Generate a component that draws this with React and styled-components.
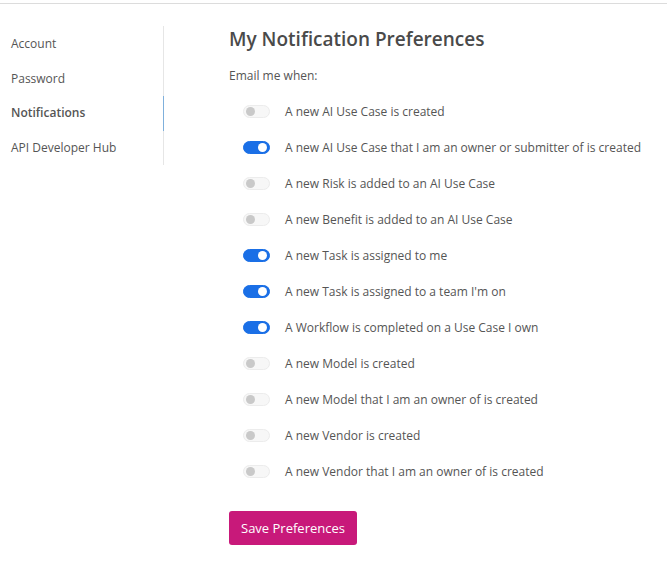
import React, { useState } from 'react';
import styled, { createGlobalStyle } from 'styled-components';

const GlobalStyle = createGlobalStyle`
  body {
    margin: 0;
    background: #fff;
    font-family: "Open Sans", "Liberation Sans", sans-serif;
    color: #555;
  }
`;

const prefsList = [
  { label: 'A new AI Use Case is created', on: false },
  { label: 'A new AI Use Case that I am an owner or submitter of is created', on: true },
  { label: 'A new Risk is added to an AI Use Case', on: false },
  { label: 'A new Benefit is added to an AI Use Case', on: false },
  { label: 'A new Task is assigned to me', on: true },
  { label: "A new Task is assigned to a team I'm on", on: true },
  { label: 'A Workflow is completed on a Use Case I own', on: true },
  { label: 'A new Model is created', on: false },
  { label: 'A new Model that I am an owner of is created', on: false },
  { label: 'A new Vendor is created', on: false },
  { label: 'A new Vendor that I am an owner of is created', on: false },
];

const navItems = ['Account', 'Password', 'Notifications', 'API Developer Hub'];

const App = () => {
  const [prefs, setPrefs] = useState(prefsList);

  const flip = (i) => {
    setPrefs(prefs.map((p, j) => (j === i ? { ...p, on: !p.on } : p)));
  };

  return (
    <>
      <GlobalStyle />
      <Page>
        <Side>
          {navItems.map((item) => (
            <NavItem key={item} active={item === 'Notifications'}>
              {item}
            </NavItem>
          ))}
        </Side>
        <Main>
          <Title>My Notification Preferences</Title>
          <Lead>Email me when:</Lead>
          <List>
            {prefs.map((p, i) => (
              <Row key={p.label}>
                <Toggle on={p.on} onClick={() => flip(i)}>
                  <Knob on={p.on} />
                </Toggle>
                <Label>{p.label}</Label>
              </Row>
            ))}
          </List>
          <SaveButton>Save Preferences</SaveButton>
        </Main>
      </Page>
    </>
  );
};

const Page = styled.div`
  display: flex;
  align-items: flex-start;
  border-top: 1px solid #dcdcdc;
  margin-top: 3px;
  min-height: 576px;
`;

const Side = styled.nav`
  width: 163px;
  margin-top: 22px;
  border-right: 1px solid #e6e6e6;
  padding: 1px 0 0;
  display: flex;
  flex-direction: column;
`;

const NavItem = styled.div`
  height: 34.5px;
  line-height: 34.5px;
  padding-left: 11px;
  font-size: 12px;
  color: #555;
  font-weight: ${(p) => (p.active ? 600 : 400)};
  margin-right: -1px;
  border-right: 1px solid ${(p) => (p.active ? '#7fb0dc' : 'transparent')};
`;

const Main = styled.div`
  padding-left: 65px;
  padding-top: 21px;
  display: flex;
  flex-direction: column;
`;

const Title = styled.h1`
  margin: 0;
  font-size: 19px;
  font-weight: 600;
  color: #4a4a4a;
  line-height: 28px;
`;

const Lead = styled.div`
  margin-top: 14px;
  font-size: 12px;
  line-height: 18px;
  color: #555;
`;

const List = styled.div`
  margin-top: 8px;
  padding-left: 14px;
  display: flex;
  flex-direction: column;
`;

const Row = styled.div`
  height: 36px;
  display: flex;
  align-items: center;
  gap: 15px;
`;

const Toggle = styled.div`
  width: 27px;
  height: 13px;
  box-sizing: border-box;
  border-radius: 7px;
  border: 1px solid ${(p) => (p.on ? '#1a6fe6' : '#ececec')};
  background: ${(p) => (p.on ? '#1a6fe6' : '#f7f7f7')};
  display: flex;
  align-items: center;
  justify-content: ${(p) => (p.on ? 'flex-end' : 'flex-start')};
  padding: 0 2px;
  cursor: pointer;
`;

const Knob = styled.span`
  width: 9px;
  height: 9px;
  border-radius: 50%;
  background: ${(p) => (p.on ? '#fff' : '#c9c9c9')};
`;

const Label = styled.span`
  font-size: 12px;
  color: #555;
  white-space: nowrap;
`;

const SaveButton = styled.button`
  align-self: flex-start;
  margin-top: 22px;
  height: 34px;
  padding: 0 12px;
  border: none;
  border-radius: 3px;
  background: #c8197a;
  color: #fff;
  font-family: "Open Sans", "Liberation Sans", sans-serif;
  font-size: 13px;
  font-weight: 500;
`;

export default App;
